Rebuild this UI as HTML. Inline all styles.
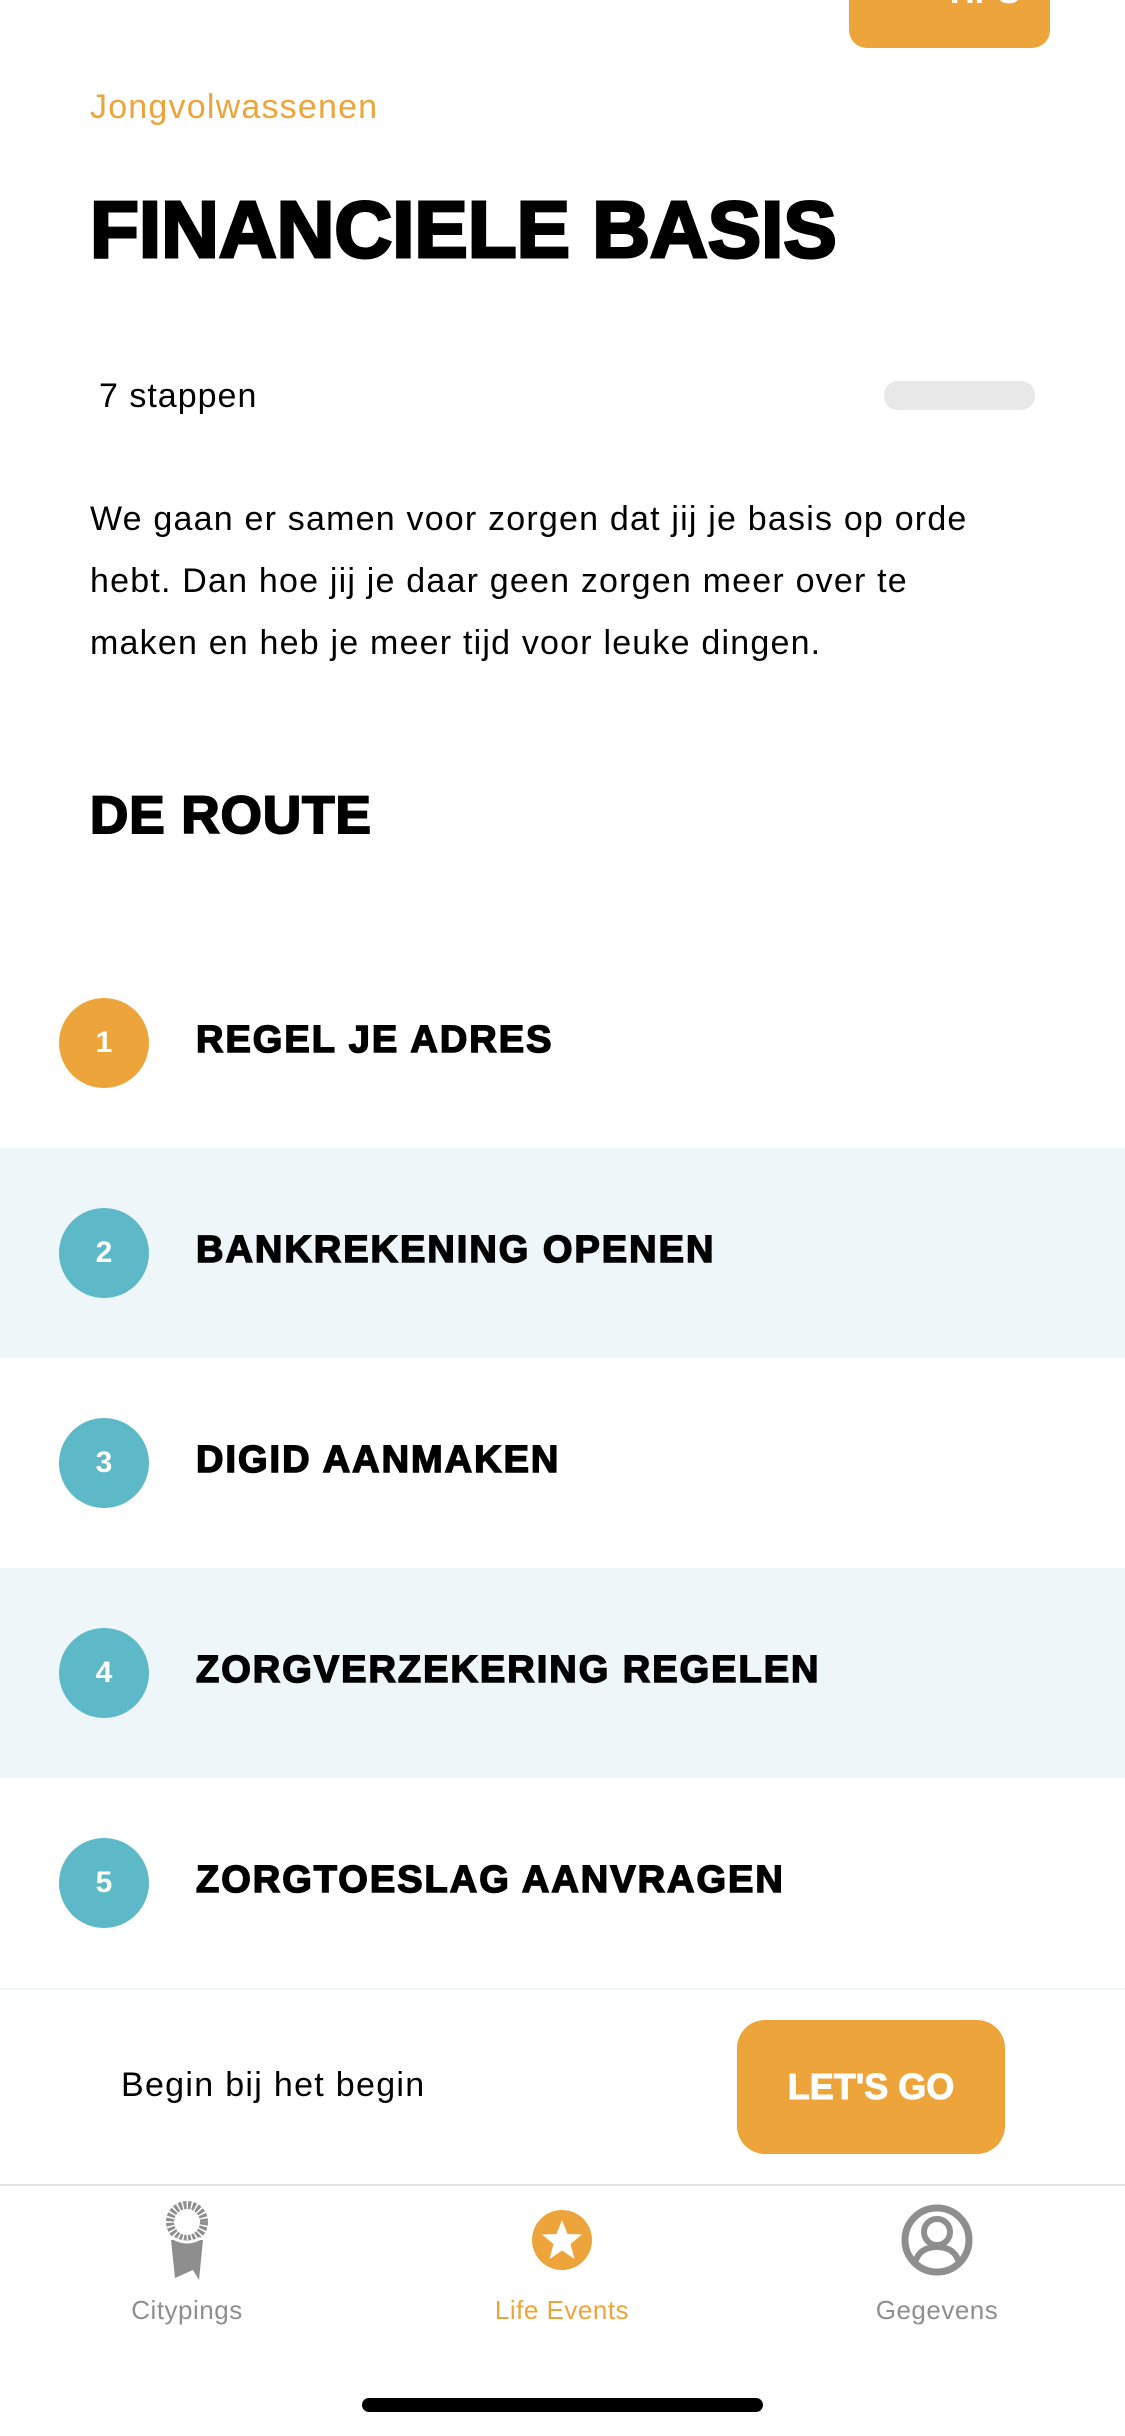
<!DOCTYPE html>
<html><head><meta charset="utf-8"><style>
*{margin:0;padding:0;box-sizing:border-box}
body{width:1125px;height:2436px;background:#fff;position:relative;overflow:hidden;font-family:"Liberation Sans",sans-serif;color:#000}
.a{position:absolute}
.hv{font-weight:bold;-webkit-text-stroke:2px #000;letter-spacing:1px}
.row{position:absolute;left:0;width:1125px;height:210px}
.circ{position:absolute;left:59px;top:60px;width:90px;height:90px;border-radius:50%;background:#5DB8C8;color:#fff;font-weight:bold;font-size:30px;line-height:90px;text-align:center}
.rt{position:absolute;left:196px;top:-3px;line-height:210px;font-size:38px;font-weight:bold;-webkit-text-stroke:1.5px #000;letter-spacing:2px}
.tab{position:absolute;top:2295px;width:300px;text-align:center;font-size:26px;color:#8e8e8e;letter-spacing:0.5px}
</style></head><body>
<div class="a" style="left:849px;top:-20px;width:201px;height:68px;background:#EDA43A;border-radius:18px;color:#fff;font-weight:bold;font-size:34px;text-align:right;padding-right:30px;line-height:24px">TIPS</div>
<div class="a" style="left:90px;top:88px;font-size:34px;color:#EDA43A;letter-spacing:1.2px">Jongvolwassenen</div>
<div class="a hv" style="left:90px;top:182px;font-size:80px;line-height:96px;-webkit-text-stroke:3px #000;letter-spacing:0">FINANCIELE BASIS</div>
<div class="a" style="left:99px;top:377px;font-size:34px;letter-spacing:1px">7 stappen</div>
<div class="a" style="left:884px;top:381px;width:151px;height:29px;border-radius:14px;background:#e8e8e8"></div>
<div class="a" style="left:90px;top:488px;width:1030px;font-size:34px;line-height:62px;letter-spacing:1.2px">We gaan er samen voor zorgen dat jij je basis op orde<br>hebt. Dan hoe jij je daar geen zorgen meer over te<br>maken en heb je meer tijd voor leuke dingen.</div>
<div class="a hv" style="left:90px;top:784px;font-size:53px;line-height:64px">DE ROUTE</div>
<div class="row" style="top:938px"><div class="circ" style="background:#EDA43A">1</div><div class="rt">REGEL JE ADRES</div></div>
<div class="row" style="top:1148px;background:#EEF6F9"><div class="circ">2</div><div class="rt">BANKREKENING OPENEN</div></div>
<div class="row" style="top:1358px"><div class="circ">3</div><div class="rt">DIGID AANMAKEN</div></div>
<div class="row" style="top:1568px;background:#EEF6F9"><div class="circ">4</div><div class="rt">ZORGVERZEKERING REGELEN</div></div>
<div class="row" style="top:1778px"><div class="circ">5</div><div class="rt">ZORGTOESLAG AANVRAGEN</div></div>
<div class="a" style="left:0;top:1988px;width:1125px;height:2px;background:#eef4f6"></div>
<div class="a" style="left:121px;top:2066px;font-size:34px;letter-spacing:1.3px">Begin bij het begin</div>
<div class="a" style="left:737px;top:2020px;width:268px;height:134px;border-radius:28px;background:#EDA43A;color:#fff;font-weight:bold;font-size:36px;line-height:134px;text-align:center;-webkit-text-stroke:1px #fff">LET'S GO</div>
<div class="a" style="left:0;top:2184px;width:1125px;height:2px;background:#e2e2e2"></div>
<svg class="a" style="left:165px;top:2200px" width="44" height="80" viewBox="0 0 44 80"><circle cx="22" cy="22" r="17" fill="none" stroke="#8e8e8e" stroke-width="8" stroke-dasharray="3 1.5"/><path d="M6 40 L38 40 L34 80 L28 70 L10 78 Z" fill="#8e8e8e"/><path d="M8 38 Q22 46 36 38" stroke="#fff" stroke-width="3" fill="none"/></svg>
<svg class="a" style="left:532px;top:2210px" width="60" height="60" viewBox="0 0 60 60"><circle cx="30" cy="30" r="30" fill="#EDA43A"/><path d="M30 10 L35.5 24 L50 24.5 L38.5 34 L42.5 49 L30 40.5 L17.5 49 L21.5 34 L10 24.5 L24.5 24 Z" fill="#fff"/></svg>
<svg class="a" style="left:901px;top:2203px" width="72" height="74" viewBox="0 0 72 74"><circle cx="36" cy="37" r="32" fill="none" stroke="#8e8e8e" stroke-width="7"/><circle cx="36" cy="29" r="13" fill="none" stroke="#8e8e8e" stroke-width="6"/><path d="M14 60 Q18 44 36 44 Q54 44 58 60" fill="none" stroke="#8e8e8e" stroke-width="6"/></svg>
<div class="tab" style="left:37px">Citypings</div>
<div class="tab" style="left:412px;color:#EDA43A">Life Events</div>
<div class="tab" style="left:787px">Gegevens</div>
<div class="a" style="left:362px;top:2398px;width:401px;height:14px;border-radius:7px;background:#000"></div>
</body></html>
